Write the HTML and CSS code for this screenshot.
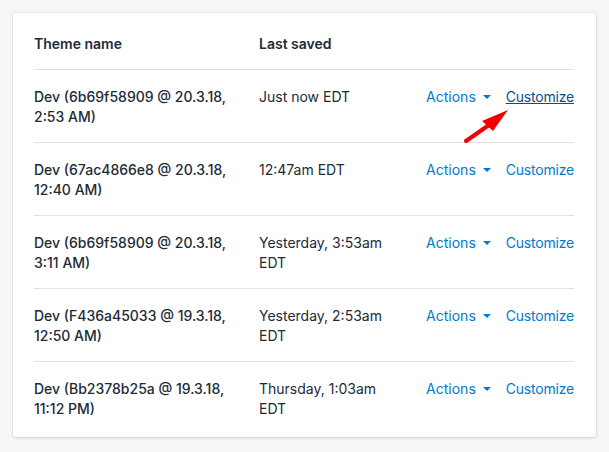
FILE: index.html
```html
<!DOCTYPE html>
<html lang="en">
<head>
  <meta charset="UTF-8">
  <title>Themes</title>
  <link rel="stylesheet" href="styles.css">
</head>
<body>
  <div class="card">
    <table class="themes">
      <thead>
        <tr><th class="col-name">Theme name</th><th class="col-saved">Last saved</th><th></th></tr>
      </thead>
      <tbody>
        <tr>
          <td class="name">Dev (6b69f58909 @ 20.3.18, 2:53 AM)</td>
          <td>Just now EDT</td>
          <td class="actions"><a class="link">Actions <span class="caret"></span></a><a class="link customize active">Customize</a></td>
        </tr>
        <tr>
          <td class="name">Dev (67ac4866e8 @ 20.3.18, 12:40 AM)</td>
          <td>12:47am EDT</td>
          <td class="actions"><a class="link">Actions <span class="caret"></span></a><a class="link customize">Customize</a></td>
        </tr>
        <tr>
          <td class="name">Dev (6b69f58909 @ 20.3.18, 3:11 AM)</td>
          <td>Yesterday, 3:53am EDT</td>
          <td class="actions"><a class="link">Actions <span class="caret"></span></a><a class="link customize">Customize</a></td>
        </tr>
        <tr>
          <td class="name">Dev (F436a45033 @ 19.3.18, 12:50 AM)</td>
          <td>Yesterday, 2:53am EDT</td>
          <td class="actions"><a class="link">Actions <span class="caret"></span></a><a class="link customize">Customize</a></td>
        </tr>
        <tr>
          <td class="name">Dev (Bb2378b25a @ 19.3.18, 11:12 PM)</td>
          <td>Thursday, 1:03am EDT</td>
          <td class="actions"><a class="link">Actions <span class="caret"></span></a><a class="link customize">Customize</a></td>
        </tr>
      </tbody>
    </table>
    <svg class="arrow" width="60" height="50" viewBox="0 0 60 50">
      <line x1="11" y1="42" x2="34" y2="26" stroke="#f20000" stroke-width="4" stroke-linecap="round"/>
      <polygon points="53,11 27,22 38,32" fill="#f20000"/>
    </svg>
  </div>
</body>
</html>
```

FILE: styles.css
```css
body {
  margin: 0;
  padding: 13px 13px 14px;
  background: #f4f6f8;
  font-family: Inter, "Noto Sans", sans-serif;
  font-size: 14px;
  line-height: 20px;
  color: #212b36;
}
.card {
  position: relative;
  background: #fff;
  border-radius: 3px;
  box-shadow: 0 0 0 1px rgba(63, 63, 68, 0.05), 0 1px 3px 0 rgba(63, 63, 68, 0.15);
  padding: 5px 22px 3px 21px;
}
.themes {
  width: 100%;
  border-collapse: collapse;
}
.themes th {
  text-align: left;
  font-weight: 600;
  padding: 16px 0 15px;
  border-bottom: 1px solid #dfe3e8;
}
.themes td {
  padding: 17px 0 15px;
  vertical-align: top;
  border-bottom: 1px solid #dfe3e8;
}
.themes tr:last-child td {
  border-bottom: none;
}
.col-name {
  width: 225px;
}
.themes td.name {
  padding-right: 28px;
  font-weight: 500;
}
.col-saved {
  width: 150px;
}
.themes td:nth-child(2) {
  padding-right: 24px;
}
.actions {
  text-align: right;
  white-space: nowrap;
}
.link {
  color: #007ace;
  text-decoration: none;
}
.customize {
  margin-left: 15px;
  letter-spacing: -0.2px;
}
.customize.active {
  color: #084e8a;
  text-decoration: underline;
}
.caret {
  display: inline-block;
  width: 0;
  height: 0;
  border-left: 4px solid transparent;
  border-right: 4px solid transparent;
  border-top: 4px solid #007ace;
  vertical-align: middle;
  margin-left: 3px;
  margin-bottom: 2px;
}
.arrow {
  position: absolute;
  left: 442px;
  top: 86px;
}
```
